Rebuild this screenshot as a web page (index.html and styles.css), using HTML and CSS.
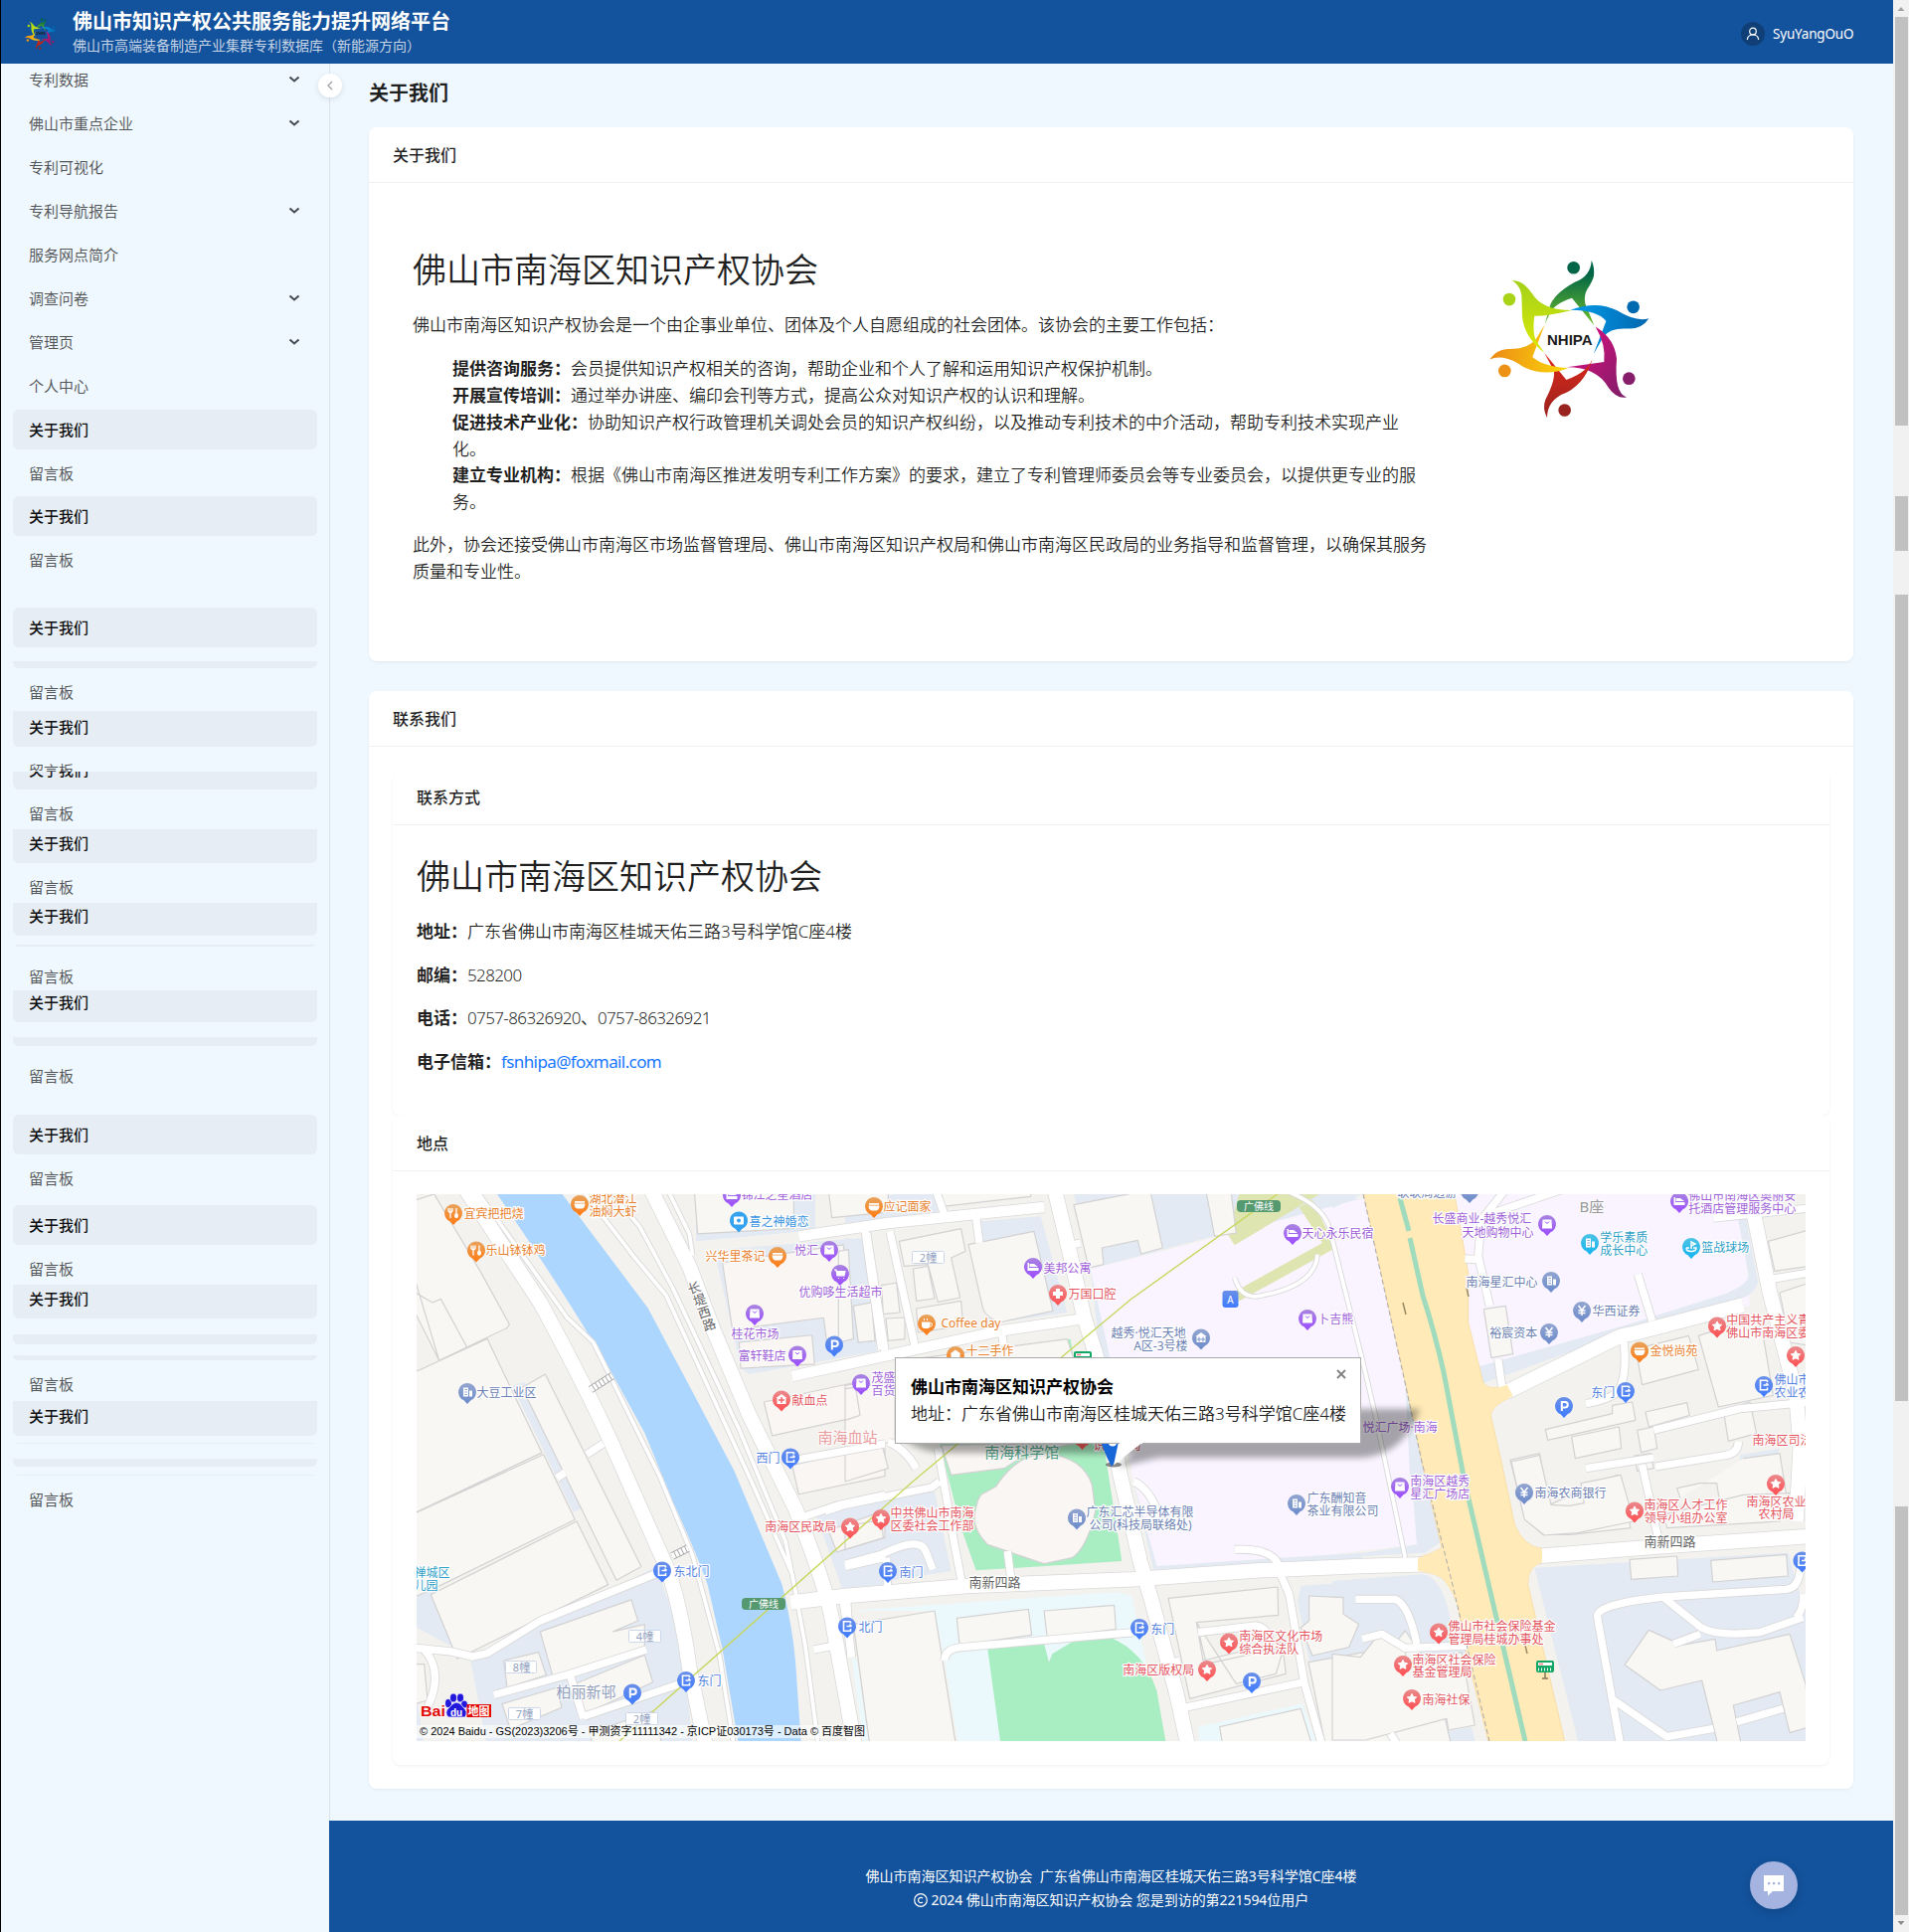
FILE: index.html
```html
<!DOCTYPE html>
<html lang="zh-CN">
<head>
<meta charset="utf-8">
<title>关于我们</title>
<link rel="stylesheet" href="styles.css">
</head>
<body>
<svg class="sprite" width="0" height="0">
  <defs>
    <linearGradient id="g-green" x1="0" y1="0" x2="0" y2="1"><stop offset=".2" stop-color="#016547"/><stop offset="1" stop-color="#6fbf2b"/></linearGradient>
    <linearGradient id="g-blue" x1="0" y1="0" x2="1" y2="0"><stop offset=".2" stop-color="#0392e0"/><stop offset="1" stop-color="#0166ad"/></linearGradient>
    <linearGradient id="g-pink" x1="0" y1="0" x2="1" y2="1"><stop offset=".3" stop-color="#c6127a"/><stop offset="1" stop-color="#7c1e66"/></linearGradient>
    <linearGradient id="g-red" x1="0" y1="0" x2="0" y2="1"><stop offset="0" stop-color="#e0281b"/><stop offset="1" stop-color="#97221d"/></linearGradient>
    <linearGradient id="g-amber" x1="0" y1="0" x2="1" y2="0"><stop offset="0" stop-color="#ec8a17"/><stop offset="1" stop-color="#fbd808"/></linearGradient>
    <linearGradient id="g-lime" x1="0" y1="0" x2="0" y2="1"><stop offset="0" stop-color="#a3d118"/><stop offset="1" stop-color="#dcea08"/></linearGradient>
    <symbol id="logo" viewBox="0 0 164 168">
      <g transform="translate(-56.67 -257.14) scale(.33333 .40816)">
        <path fill="url(#g-green)" d="M484 642Q494 658 491 680Q488 692 472 712Q460 728 465 748L492 802L425 735Q370 750 357 774L343 800Q350 780 357 758Q368 725 435 695Q482 680 484 642Z"/>
        <ellipse fill="#016547" cx="430" cy="660" rx="19" ry="15.500"/>
        <path fill="url(#g-blue)" d="M420 764Q500 740 560 765Q620 795 657 785Q635 813 590 810Q540 808 520 830L490 873L528 792Q505 765 420 764Z"/>
        <ellipse fill="#0069b0" cx="610" cy="757" rx="19" ry="15.500"/>
        <path fill="url(#g-pink)" d="M496 805Q555 835 560 885Q552 970 590 979Q560 984 535 955Q500 905 410 905L522 892Q528 850 496 805Z"/>
        <ellipse fill="#861d6b" cx="597" cy="933" rx="19" ry="15.500"/>
        <path fill="url(#g-red)" d="M342 870L408 936Q480 915 490 876Q470 940 410 967Q350 985 350 1030Q335 1005 345 985Q380 930 368 910Z"/>
        <ellipse fill="#99231e" cx="403" cy="1011" rx="19" ry="15.500"/>
        <path fill="url(#g-amber)" d="M343 800L306 880Q340 905 415 907Q345 930 280 905Q220 870 177 886Q195 862 230 860Q290 862 317 835Z"/>
        <ellipse fill="#ed9214" cx="222" cy="914" rx="19" ry="15.500"/>
        <path fill="url(#g-lime)" d="M244 692Q275 688 305 724Q335 765 425 765Q350 780 312 779Q305 820 317 840L342 870Q280 830 275 780Q274 745 273 728Q268 702 244 692Z"/>
        <ellipse fill="#a9d316" cx="236" cy="738" rx="19" ry="15.500"/>
      </g>
      <text x="60" y="89.500" textLength="45.500" lengthAdjust="spacingAndGlyphs" class="logo-text">NHIPA</text>
    </symbol>
    <symbol id="chev" viewBox="0 0 12 8"><path d="M1.500 1.500 6 5.500 10.500 1.500" fill="none" stroke="#444a50" stroke-width="2"/></symbol>
  </defs>
</svg>

<div class="app">
  <div class="screen">
    <header class="topbar">
      <svg class="brand-logo" width="34" height="34"><use href="#logo"/></svg>
      <div class="brand">
        <div class="brand-title">佛山市知识产权公共服务能力提升网络平台</div>
        <div class="brand-sub">佛山市高端装备制造产业集群专利数据库（新能源方向）</div>
      </div>
      <div class="user">
        <span class="avatar"><svg width="14" height="14" viewBox="0 0 14 14"><circle cx="7" cy="4.500" r="3.300"/><path d="M1.300 13Q1.800 8 7 8T12.700 13"/></svg></span>
        <span class="user-name">SyuYangOuO</span>
      </div>
    </header>

    <div class="body">
      <nav class="sidebar">
        <button class="collapse"><svg width="8" height="10" viewBox="0 0 8 10"><path d="M6 1 2 5 6 9"/></svg></button>
        <div class="slice s36"><div class="item">专利数据<svg><use href="#chev"/></svg></div></div>
        <div class="slice g4"><div class="item">佛山市重点企业<svg><use href="#chev"/></svg></div></div>
        <div class="slice g4"><div class="item">专利可视化</div></div>
        <div class="slice g4"><div class="item">专利导航报告<svg><use href="#chev"/></svg></div></div>
        <div class="slice g4"><div class="item">服务网点简介</div></div>
        <div class="slice g4"><div class="item">调查问卷<svg><use href="#chev"/></svg></div></div>
        <div class="slice g4"><div class="item">管理页<svg><use href="#chev"/></svg></div></div>
        <div class="slice g4"><div class="item">个人中心</div></div>
        <div class="slice g4"><div class="item on">关于我们</div></div>
        <div class="slice g4"><div class="item">留言板</div></div>
        <div class="slice g3"><div class="item on">关于我们</div></div>
        <div class="slice g4"><div class="item">留言板</div></div>
        <div class="slice g28"><div class="item on">关于我们</div></div>
        <div class="slice g14 s7"><div class="item on"></div></div>
        <div class="slice g5 s38 top"><div class="item">留言板</div></div>
        <div class="slice s36"><div class="item on">关于我们</div></div>
        <div class="slice g5 s20 top"><div class="item">留言板</div></div>
        <div class="slice s18"><div class="item on">关于我们</div></div>
        <div class="slice g5 s35 top"><div class="item">留言板</div></div>
        <div class="slice s34"><div class="item on">关于我们</div></div>
        <div class="slice g5 s35 top"><div class="item">留言板</div></div>
        <div class="slice s33"><div class="item on">关于我们</div></div>
        <div class="slice g9 s2"><div class="item on"></div></div>
        <div class="slice g11 s33 top"><div class="item">留言板</div></div>
        <div class="slice s32"><div class="item on">关于我们</div></div>
        <div class="slice g15 s9"><div class="item on"></div></div>
        <div class="slice g10"><div class="item">留言板</div></div>
        <div class="slice g19"><div class="item on">关于我们</div></div>
        <div class="slice g4"><div class="item">留言板</div></div>
        <div class="slice g7"><div class="item on">关于我们</div></div>
        <div class="slice g5 s35 top"><div class="item">留言板</div></div>
        <div class="slice s34"><div class="item on">关于我们</div></div>
        <div class="slice g16 s10"><div class="item on"></div></div>
        <div class="slice g11 s5"><div class="item on"></div></div>
        <div class="slice g5 s36 top"><div class="item">留言板</div></div>
        <div class="slice s35"><div class="item on">关于我们</div></div>
        <div class="slice g7 s1"><div class="item on"></div></div>
        <div class="slice g15 s8"><div class="item on"></div></div>
        <div class="slice g8 s1"><div class="item on"></div></div>
        <div class="slice g4"><div class="item">留言板</div></div>
      </nav>

      <div class="content">
        <main class="main">
          <h2 class="page-title">关于我们</h2>

          <section class="card about">
            <h3 class="card-head">关于我们</h3>
            <div class="about-body">
              <div class="about-text">
                <h1>佛山市南海区知识产权协会</h1>
                <p>佛山市南海区知识产权协会是一个由企事业单位、团体及个人自愿组成的社会团体。该协会的主要工作包括：</p>
                <ul>
                  <li><b>提供咨询服务：</b>会员提供知识产权相关的咨询，帮助企业和个人了解和运用知识产权保护机制。</li>
                  <li><b>开展宣传培训：</b>通过举办讲座、编印会刊等方式，提高公众对知识产权的认识和理解。</li>
                  <li><b>促进技术产业化：</b>协助知识产权行政管理机关调处会员的知识产权纠纷，以及推动专利技术的中介活动，帮助专利技术实现产业化。</li>
                  <li><b>建立专业机构：</b>根据《佛山市南海区推进发明专利工作方案》的要求，建立了专利管理师委员会等专业委员会，以提供更专业的服务。</li>
                </ul>
                <p>此外，协会还接受佛山市南海区市场监督管理局、佛山市南海区知识产权局和佛山市南海区民政局的业务指导和监督管理，以确保其服务质量和专业性。</p>
              </div>
              <svg class="about-logo" width="164" height="168"><use href="#logo"/></svg>
            </div>
          </section>

          <section class="card contact">
            <h3 class="card-head">联系我们</h3>
            <div class="contact-body">
              <section class="card inner info">
                <h3 class="card-head">联系方式</h3>
                <div class="info-body">
                  <h1>佛山市南海区知识产权协会</h1>
                  <p><b>地址：</b>广东省佛山市南海区桂城天佑三路3号科学馆C座4楼</p>
                  <p><b>邮编：</b><span class="num">528200</span></p>
                  <p><b>电话：</b><span class="num">0757-86326920</span>、<span class="num">0757-86326921</span></p>
                  <p><b>电子信箱：</b><a>fsnhipa@foxmail.com</a></p>
                </div>
              </section>
              <section class="card inner place">
                <h3 class="card-head">地点</h3>
                <div class="map">
<svg class="map-canvas" width="1397" height="550" viewBox="419 1201 1397 550">
  <defs>
    <linearGradient id="p-or" x1="0" y1="0" x2="0" y2="1"><stop offset="0" stop-color="#e8a35c"/><stop offset="1" stop-color="#ff7a12"/></linearGradient>
    <linearGradient id="p-pu" x1="0" y1="0" x2="0" y2="1"><stop offset="0" stop-color="#a884e0"/><stop offset="1" stop-color="#9c4cff"/></linearGradient>
    <linearGradient id="p-bl" x1="0" y1="0" x2="0" y2="1"><stop offset="0" stop-color="#6a90e8"/><stop offset="1" stop-color="#3f7bff"/></linearGradient>
    <linearGradient id="p-re" x1="0" y1="0" x2="0" y2="1"><stop offset="0" stop-color="#ea8a8c"/><stop offset="1" stop-color="#ff4d50"/></linearGradient>
    <linearGradient id="p-sl" x1="0" y1="0" x2="0" y2="1"><stop offset="0" stop-color="#92a5cf"/><stop offset="1" stop-color="#6c8bcb"/></linearGradient>
    <linearGradient id="p-cy" x1="0" y1="0" x2="0" y2="1"><stop offset="0" stop-color="#4dc3e4"/><stop offset="1" stop-color="#15b4f0"/></linearGradient>
    <path id="pin" d="M0-9A9 9 0 0 1 3.500 8.300L0 12-3.500 8.300A9 9 0 0 1 0-9Z"/>
    <g id="i-star"><path fill="#fff" stroke="#fff" stroke-linejoin="round" d="M0-4.600 1.600-1.600 4.700-1.200 2.400 1.100 3 4.300 0 2.800-3 4.300-2.400 1.100-4.700-1.200-1.600-1.600Z"/></g>
    <g id="i-gate"><path fill="none" stroke="#fff" stroke-width="1.600" d="M3.500-4.700H-3.500V4.700H3.500V2.500M3.500-4.700V-3M-.5 0H4.500M2.500-2 4.500 0"/></g>
    <g id="i-p"><path fill="none" stroke="#fff" stroke-width="2" d="M-2.200 5V-4H1A2.500 2.500 0 0 1 1 1.500H-2"/></g>
    <g id="i-bag"><path fill="#fff" d="M-4.500-4.500H4.500L5 4.500H-5Z"/><path fill="none" stroke="#a45cff" stroke-width="1" d="M-2-2.500Q0 1 2-2.500"/></g>
    <g id="i-bed"><path fill="#fff" d="M-5.500-4H-4V1H5.500V4H-5.500ZM-3.500-3H1L5 0H-3.500Z"/></g>
    <g id="i-bowl"><path fill="#fff" d="M-5.500-.5H5.500Q5 4.500 2 4.500H-2Q-5 4.500-5.500-.5ZM-5-3H5V-1.300H-5Z"/></g>
    <g id="i-cup"><path fill="#fff" d="M-5-1.500H3.500V2Q3.500 5 .5 5H-2Q-5 5-5 2Z"/><path fill="none" stroke="#fff" d="M3.500-.5Q6-.5 5.500 1.500T3.300 3M-2.500-3V-5M.5-3V-5"/></g>
    <g id="i-fork"><path fill="none" stroke="#fff" stroke-width="1.300" d="M-5-5V-2.500Q-5-1-3-1T-1-2.500V-5M-3-5V5M3 5V-5"/><ellipse fill="#fff" cx="3" cy="2.500" rx="2" ry="2.500"/></g>
    <g id="i-bld"><path fill="#fff" d="M-4-4.500H1V4.500H-4ZM2-1.500H5V4.500H2Z"/><path stroke="#7f97cd" stroke-width=".8" d="M-2.800-2.500H0M-2.800 0H0M-2.800 2.500H0"/></g>
    <g id="i-yen"><path fill="none" stroke="#fff" stroke-width="1.500" d="M-3.500-5 0-.5 3.500-5M0-.5V5M-3.500 0H3.500M-3.500 2.500H3.500"/></g>
    <g id="i-plus"><path fill="#fff" d="M-2-5H2V-2H5V2H2V5H-2V2H-5V-2H-2Z"/></g>
    <g id="i-home"><path fill="#fff" d="M0-5.500 5.500-1.500H4.500V4.500H-4.500V-1.500H-5.500Z"/></g>
    <g id="bus"><rect x="-9" y="-9" width="18" height="12" rx="2" fill="#12a765"/><rect x="-7" y="-7" width="14" height="3" fill="#fff"/><path d="M-6-5.500H-2" stroke="#f08080" stroke-width="1.500"/><path d="M-7 0H7" stroke="#fff" stroke-width="3" stroke-dasharray="1 2"/><path d="M0 3V9M-3 9H3" stroke="#887755" stroke-width="1.500"/></g>

    <g id="roads-xl">
      <g transform="translate(410 1190) scale(.33333 .36364)">
        <path d="M170 10 400 330Q560 600 640 770L790 1080Q830 1200 850 1340L900 1560"/>
        <path d="M730 10 850 230 920 400 1030 640 1170 900Q1270 1130 1285 1230L1350 1560"/>
      </g>
      <g transform="translate(850 1190) scale(.33333)"><path d="M630 10 685 240 720 400 770 560 830 880 890 1140 925 1260 1000 1540 1035 1700"/></g>
      <g transform="translate(1340 1190) scale(.33333)"><path d="M525 630 850 470Q870 460 900 455L1240 367M1255 10 1320 330 1400 640 1412 800 1400 1020M620 1125 1000 1095 1440 1065"/></g>
      <g transform="translate(850 1470) scale(.33333)"><path d="M-165 425 0 405 370 375 870 355 1250 328 1560 315 1750 310"/></g>
    </g>
    <g id="roads-l">
      <g transform="translate(850 1190) scale(.33333)"><path d="M-140 160 130 120 600 72M-160 582 0 547 470 445 710 410"/></g>
    </g>
    <g id="roads-m">
      <g transform="translate(410 1190) scale(.33333 .36364)">
        <path d="M1380 130 1430 460M1170 930 1300 890 1440 862M190 1310 240 1300 400 1210 750 1080M50 1290Q110 1350 60 1450M20 1285 130 1295 200 1310M530 1475 820 1385M490 1360 530 1480M540 750 590 720M1140 770 1440 720M1320 1060 1440 1035M1315 1160 1340 1310M260 1415 480 1360 720 1290M450 815 475 800M1225 1290 1280 1280"/>
      </g>
      <g transform="translate(850 1190) scale(.33333)"><path d="M65 150 120 505M135 145 210 490M270 10 298 90M395 105 405 180M470 430 478 490M280 800 330 1090 355 1220M130 780Q180 800 215 860M-60 990 0 970 260 918 285 900M670 190 710 180"/></g>
      <g transform="translate(850 1470) scale(.33333)"><path d="M490 270 500 350M128 390 125 290M0 310 110 280Q230 220 245 275L265 325M870 60Q920 80 950 170M1175 265Q1290 260 1310 315M1305 320 1340 400 1385 665 1440 860M1010 745 1385 665M300 600Q300 565 350 560L870 515M1065 515 1240 495Q1275 500 1285 550M5 420 18 590M980 610 1010 600"/></g>
      <g transform="translate(1340 1190) scale(.33333)"><path d="M880 480Q890 590 860 630 830 655 765 665M922 275 965 415M500 530 512 615M530 10 450 110 440 220 475 370M470 95 690 20M400 228 440 230M970 745 1230 680 1440 660M765 860 970 828M975 855 1190 820Q1225 812 1225 780M935 850 985 1080M1320 290 1440 270M1150 105 1440 75"/></g>
      <g transform="translate(1340 1470) scale(.33333)"><path d="M70 415 190 415Q230 430 255 550M90 535 150 520 220 562 410 555M870 860 845 720 800 470Q790 430 1000 408L1370 385Q1415 380 1412 300M1000 410 1100 490Q1140 530 1290 515L1420 470M850 720 1010 830 1150 805M1220 785 1360 745M1420 400Q1425 440 1400 470M175 820 200 860M1030 550 1110 520"/></g>
    </g>
    <g id="roads-s">
      <g transform="translate(410 1190) scale(.33333 .36364)"><path d="M200 10 480 370 560 440 620 550 760 810 860 1030 940 1300 985 1560M520 10 680 200 780 310 1040 830 1160 1080 1200 1280 1240 1560M600 10 700 120 800 290 1000 680 1140 990 1175 1150M780 10 850 140 860 200"/></g>
      <g transform="translate(850 1190) scale(.33333)"><path d="M1290 10Q1430 50 1460 130L1560 530 1600 700 1690 1130M1175 285Q1195 350 1250 340 1420 310 1425 215"/></g>
    </g>
  </defs>

  <rect x="419" y="1201" width="1397" height="550" fill="#f3f2ee"/>

  <!-- land blocks -->
  <g transform="translate(410 1190) scale(.33333 .36364)">
    <path class="block" d="M316 560 350 550 360 560 523 900 500 910ZM20 1130 80 1110 150 1290 20 1225ZM190 1320 750 1060 830 1270 860 1560H240ZM925 185 1390 150 1415 465 1030 528 1005 510ZM870 80 1230 30V130L870 160ZM1230 910 1440 860V1110L1310 1120ZM20 1380 50 1560H20Z"/>
    <path class="water" d="M255 10 450 10 725 345Q780 440 850 560L985 795 1130 1110Q1160 1220 1170 1320L1188 1560H1000L950 1290 905 1110Q870 1020 800 880L715 690 625 540Q480 310 255 10Z"/>
  </g>
  <g transform="translate(850 1190) scale(.33333)">
    <path class="block" d="M685 10H1500L1560 60 1170 145 740 258ZM405 115 590 100 670 390 430 425ZM160 30H280V90L0 120V70ZM0 165 45 170 95 490 0 520ZM740 260 765 350 800 530 770 520Z"/>
    <path class="mall" d="M740 258 960 205 1560 45 1765 10H2700L2730 370 2350 430 1900 560 1730 900 1725 1090 1470 1120 940 1155 870 900 800 530Z"/>
    <path class="olive" d="M1195 10H1470L1175 187 1155 155ZM1370 72 1410 50 1480 195 1190 355 1170 330 1440 180Z"/>
    <path class="green" d="M285 785H780L835 1140 395 1168 350 1040ZM480 500 680 470 690 530 400 530Z"/>
  </g>
  <g transform="translate(850 1470) scale(.33333)">
    <path class="block" d="M0 130 270 90 320 330 0 380ZM1375 375 1700 350V600H1400L1365 420ZM870 60 940 315 1560 275V300L930 325Z"/>
    <path class="pale" d="M10 450 820 393 865 405 960 843H340L300 600 270 450ZM1065 800 1380 730 1420 843H1070ZM20 590 35 600 70 843H55Z"/>
    <path class="green" d="M430 565 600 548 615 605 625 580 700 535 800 530Q900 570 940 690L967 843H468Z"/>
  </g>
  <g transform="translate(1340 1190) scale(.33333)">
    <path class="block" d="M442 553 880 430 1190 332Q1265 300 1255 270L1215 60H1240L1285 300Q1270 335 1240 345L880 450 450 605ZM218 560 235 900 285 900ZM0 30H95L0 75ZM1230 820 1350 800 1310 900H1175V880L1230 860Z"/>
  </g>
  <g transform="translate(1340 1470) scale(.33333)">
    <path class="block" d="M610 320 1375 275 1440 500V860H745ZM0 360 270 340Q330 345 355 470L405 580 220 600 0 570ZM235 0 280 30 330 240 280 275 0 290 255 250ZM1175 40 1270 15V45L1180 60ZM1195 130 1370 90 1370 120 1210 165ZM200 843 420 800 430 843Z"/>
  </g>

  <!-- buildings -->
  <g class="bld" transform="translate(410 1190) scale(.33333 .36364)">
    <path d="M-20 60 80 30 220 245 307 390 300 400 95 490 20 260ZM-20 280 75 330 100 320 180 455 95 490ZM-20 540 240 430 405 745-20 930ZM-20 930 410 750 505 930 70 1125-20 1160ZM70 1138 510 935 605 1110 150 1315ZM345 565 415 528 705 1060 630 1098ZM400 1240 675 1152 695 1210 620 1240 715 1220V1290L440 1370ZM290 1320 395 1297 418 1360 300 1395ZM490 1390 715 1305 740 1380 530 1470ZM285 1440 450 1395 465 1450 310 1510ZM550 1520 740 1460 770 1560H560ZM-20 1330 50 1330 60 1430-20 1450Z"/>
    <path class="warm" d="M950 220 1315 170 1345 430 1265 440 1255 372 980 405ZM1000 440 1220 420 1228 500 1005 512ZM1345 340 1400 330 1410 435 1360 440ZM1075 605 1355 550 1363 645 1100 698ZM1160 780 1440 720V810L1180 860ZM1270 960 1440 905V980L1295 1020Z"/>
    <path d="M865 20 1165 20V125L875 140ZM1270 20H1450V80L1280 95Z"/>
  </g>
  <g class="bld" transform="translate(850 1190) scale(.33333)">
    <path d="M288 20H560V40L295 70ZM163 175 350 137 363 205 320 225 347 345 280 358 250 245 178 250ZM372 185 570 145 627 385 465 420Q420 400 415 375ZM205 258 250 250 270 348 215 355ZM690 65 920 20 958 195 893 213 883 172 775 195 780 245 735 255ZM1090 30H1165L1180 150 1115 160ZM110 308 155 300 165 390 115 395ZM123 408 180 405 180 470 130 475ZM25 370 80 360 90 475 40 480ZM215 378 350 355 356 430 220 450ZM-20 205 10 200 25 470-20 480ZM210 530 670 470 690 530Z"/>
    <path class="warm" d="M0 620 150 600V780L0 800ZM0 800 110 785 130 860 0 900ZM290 790 700 785 560 810 480 860 320 880ZM0 610 30 605 45 700 0 715Z"/>
    <path class="warm" d="M410 940 455 915Q520 815 610 815 720 830 745 910L755 990Q730 1100 685 1130L600 1148 430 1090Q390 1050 390 1010 395 960 410 940Z"/>
  </g>
  <g class="bld" transform="translate(850 1470) scale(.33333)">
    <path d="M25 490 270 450 335 860H75ZM337 472 553 445 563 523 345 553ZM600 450 812 433 817 505 610 532ZM975 412 1305 378 1307 463 1060 485 1090 610 1320 560 1330 640 1040 715ZM1060 485 1080 600 1330 540 1300 640 1180 670ZM1130 800 1375 745 1410 860H1140ZM1400 405 1503 410V460L1550 490 1520 560 1410 585 1375 500 1400 480ZM1398 605 1650 560 1690 510 1780 640 1830 860H1450ZM0 195 110 175 115 230 0 265Z"/>
  </g>
  <g class="bld" transform="translate(1340 1190) scale(.33333)">
    <path d="M457 380 523 370 545 515 480 527ZM915 500 1075 460 1105 562 935 608ZM1105 460 1290 400 1330 640 1165 675ZM1315 175 1440 140V250L1335 265ZM1350 330 1440 300V490L1380 480ZM643 743 845 695V670L905 660 915 715 650 775ZM722 765 865 735 872 800 733 830ZM945 690 1070 662 1078 700 955 735ZM920 745 970 735 980 800 932 812ZM1180 685 1260 660 1280 755 1195 778ZM537 835 625 815 655 970 860 880 900 1040 720 1060 635 1060 580 1010ZM912 822 960 815 970 860 920 868ZM1240 830 1350 815 1370 940 1170 970 1160 905 1110 905 1040 920 1050 950"/>
  </g>
  <g class="bld" transform="translate(1340 1470) scale(.33333)">
    <path d="M540 0 580 175 640 222 740 215 910 180 870 40 800 55 750 65 760 125 715 133 660 130 625-20ZM897 295 1040 285 1043 345 902 355ZM1142 298 1370 280 1375 345 1148 363ZM955 508 1055 553 1155 535 1160 570 1380 520 1428 670 1440 800 1380 818 1350 695 1210 735 1235 860H1165L1115 660 990 690 882 613ZM0 580 85 590 145 515 220 570 225 610 390 575 430 795 350 810 345 775 100 840H0ZM1010 200 1000 160 1240 100 1380 95 1350 180Z"/>
  </g>

  <!-- trunk road -->
  <path class="trunk" transform="translate(1340 1190) scale(.33333)" d="M90 10H365L410 270V420L455 600Q470 630 528 608L545 642Q480 670 478 700L510 840 550 1030Q580 1100 635 1102V1145Q590 1150 590 1210L705 1700H475L400 1400 380 1280Q365 1230 340 1200 320 1175 258 1170V1130Q300 1120 330 1100L270 840 220 600Z"/>

  <!-- streets: casing first, then surface -->
  <g class="road casing"><use href="#roads-s" class="w-s"/><use href="#roads-m" class="w-m"/><use href="#roads-l" class="w-l"/><use href="#roads-xl" class="w-xl"/></g>
  <g class="road surface"><use href="#roads-s" class="w-s"/><use href="#roads-m" class="w-m"/><use href="#roads-l" class="w-l"/><use href="#roads-xl" class="w-xl"/></g>
  <path class="trunk flat" transform="translate(1340 1190) scale(.33333)" d="M455 600Q470 630 528 608L545 642Q480 670 478 700L400 700ZM550 1030Q580 1100 633 1102V1145Q590 1150 590 1210L500 1200V1000ZM380 1280Q365 1230 340 1200 320 1175 258 1170V1130Q300 1120 330 1100L450 1100V1280Z"/>
  <path class="median" d="M1408 1205 1417 1238M1418 1245 1431 1303Q1443 1340 1452 1380L1473 1490 1534 1751"/>
  <path class="rail" d="M1371 1201 1413 1390 1430 1470 1460 1590 1498 1751"/>
  <g class="ladder"><path d="M594 1397.500 616 1383.500M676 1565 692 1557"/><path class="rungs" d="M594 1397.500 616 1383.500M676 1565 692 1557"/></g>
  <path class="metro" d="M1286 1200 1137 1307 918 1490 623 1751"/>
  <path d="M1411 1310 1414 1322M1475 1295 1477 1304M1534 1655 1536 1663" stroke="#9b8a64" stroke-width="1.500"/>

  <!-- map labels, y is the optical middle of the line -->
  <g class="lb" transform="translate(-.5 3.800)">
    <g fill="#e8812c">
      <text x="467" y="1221.600">宜宾把把烧</text><text x="489" y="1258.700">乐山钵钵鸡</text><text x="593" y="1206.400">湖北潜江</text><text x="593" y="1219">油焖大虾</text>
      <text x="710" y="1264">兴华里茶记</text><text x="889" y="1214.700">应记面家</text><text x="947" y="1331.700">Coffee day</text><text x="972" y="1359">十二手作</text><text x="1660" y="1359.700">金悦尚苑</text>
    </g>
    <g fill="#a05fd8">
      <text x="746" y="1202">锦江之星酒店</text><text x="799.500" y="1258">悦汇</text><text x="804" y="1300.500">优购哆生活超市</text><text x="736" y="1342">桂花市场</text><text x="743" y="1364">富轩鞋店</text><text x="877" y="1386.700">茂盛</text><text x="877" y="1399">百货</text>
      <text x="1050" y="1276">美邦公寓</text><text x="1325.700" y="1327.700">卜吉熊</text><text x="1310" y="1241.700">天心永乐民宿</text><text x="1441" y="1226.700">长盛商业-越秀悦汇</text><text x="1471" y="1240">天地购物中心</text>
      <text x="1698.700" y="1203">佛山市南海区奥丽安</text><text x="1698.700" y="1216">托酒店管理服务中心</text><text x="1371" y="1436">悦汇广场·南海</text><text x="1418.700" y="1490">南海区越秀</text><text x="1418.700" y="1503">星汇广场店</text>
    </g>
    <g fill="#e45560">
      <text x="797" y="1409">献血点</text><text x="769.700" y="1536.500">南海区民政局</text><text x="896" y="1522">中共佛山市南海</text><text x="896" y="1535">区委社会工作部</text><text x="1075" y="1302.700">万国口腔</text><text x="1100" y="1454">识产权局</text>
      <text x="1246.700" y="1646.700">南海区文化市场</text><text x="1246.700" y="1659">综合执法队</text><text x="1129.700" y="1680">南海区版权局</text><text x="1736.700" y="1328.700">中国共产主义青</text><text x="1736.700" y="1341">佛山市南海区委</text><text x="1763" y="1449">南海区司法</text>
      <text x="1654" y="1514.700">南海区人才工作</text><text x="1654" y="1527.700">领导小组办公室</text><text x="1757" y="1511">南海区农业</text><text x="1769" y="1523.700">农村局</text><text x="1457" y="1636.700">佛山市社会保险基金</text><text x="1457" y="1649.700">管理局桂城办事处</text>
      <text x="1421" y="1670">南海区社会保险</text><text x="1421" y="1682.700">基金管理局</text><text x="1431" y="1710">南海社保</text>
    </g>
    <g fill="#5583e0">
      <text x="761" y="1467">西门</text><text x="678" y="1581">东北门</text><text x="864" y="1637">北门</text><text x="702" y="1691">东门</text><text x="905" y="1582">南门</text><text x="1157.700" y="1639">东门</text><text x="1600.700" y="1401">东门</text><text x="1785" y="1388">佛山市</text><text x="1785" y="1401">农业农</text>
    </g>
    <g fill="#6b80b3">
      <text x="480" y="1401">大豆工业区</text><text x="1118" y="1341">越秀·悦汇天地</text><text x="1140.700" y="1354">A区-3号楼</text><text x="1093" y="1521.700">广东汇芯半导体有限</text><text x="1096" y="1534.700">公司(科技局联络处)</text><text x="1315" y="1507">广东酬知音</text><text x="1315" y="1520">茶业有限公司</text>
      <text x="1406" y="1200">联联周边游</text><text x="1475" y="1290">南海星汇中心</text><text x="1602" y="1319">华西证券</text><text x="1498.700" y="1341.700">裕宸资本</text><text x="1544" y="1502.700">南海农商银行</text>
    </g>
    <g fill="#2ea0c8"><text x="754" y="1229" fill="#3a93e0">喜之神婚恋</text><text x="417" y="1582.400">禅城区</text><text x="417" y="1595.500">儿园</text><text x="1609.700" y="1245.700">学乐素质</text><text x="1609.700" y="1258.700">成长中心</text><text x="1711.700" y="1255.700">篮战球场</text></g>
    <g fill="#666" class="street"><text x="975" y="1592">南新四路</text><text x="1654" y="1551">南新四路</text><text x="694 699.500 704 709" y="1298 1310 1322.500 1335" rotate="-18">长堤西路</text></g>
    <g class="area"><text x="823" y="1447" fill="#ea9c9e">南海血站</text><text x="560" y="1703" fill="#93a0bd">柏丽新邨</text><text x="990.700" y="1462" fill="#55a58a">南海科学馆</text><text x="1589" y="1215.500" fill="#999">B座</text></g>
  </g>
  <g class="tag">
    <rect x="632.500" y="1639.500" width="32" height="12" rx="1"/><rect x="508.500" y="1670.500" width="31" height="12" rx="1"/><rect x="511.500" y="1717.500" width="32" height="12" rx="1"/><rect x="629.500" y="1722.500" width="32" height="12" rx="1"/><rect x="917.500" y="1258.500" width="32" height="12" rx="1"/>
    <text x="648.500" y="1649.500">4幢</text><text x="524.500" y="1680.500">8幢</text><text x="527.500" y="1727.500">7幢</text><text x="645.500" y="1732.500">2幢</text><text x="933.500" y="1268.500">2幢</text>
  </g>
  <g class="line-tag"><rect x="746" y="1607" width="44" height="12" rx="4"/><text x="768" y="1617">广佛线</text><rect x="1244" y="1207" width="44" height="12" rx="4"/><text x="1266" y="1217">广佛线</text></g>

  <!-- pins -->
  <g fill="url(#p-or)">
    <g transform="translate(456 1220)"><use href="#pin"/><use href="#i-fork"/></g><g transform="translate(479 1257.500)"><use href="#pin"/><use href="#i-fork"/></g><g transform="translate(583 1211)"><use href="#pin"/><use href="#i-bowl"/></g><g transform="translate(782 1263)"><use href="#pin"/><use href="#i-bowl"/></g>
    <g transform="translate(879 1213)"><use href="#pin"/><use href="#i-bowl"/></g><g transform="translate(932 1331)"><use href="#pin"/><use href="#i-cup"/></g><g transform="translate(961 1363)"><use href="#pin"/><use href="#i-home"/></g><g transform="translate(1649 1358.500)"><use href="#pin"/><use href="#i-bowl"/></g>
  </g>
  <g fill="url(#p-pu)">
    <g transform="translate(736 1202)"><use href="#pin"/><use href="#i-bed"/></g><g transform="translate(834 1257)"><use href="#pin"/><use href="#i-bag"/></g><g transform="translate(845 1281)"><use href="#pin"/><path d="M-6-4H-4L-3 2H4L5-2.500H-4M-2 4.500H-1M3 4.500H4" fill="#fff" stroke="#fff" stroke-width="1.200"/></g><g transform="translate(759 1321)"><use href="#pin"/><use href="#i-bag"/></g><g transform="translate(802 1362.500)"><use href="#pin"/><use href="#i-bag"/></g><g transform="translate(866 1391)"><use href="#pin"/><use href="#i-bag"/></g>
    <g transform="translate(1039 1274)"><use href="#pin"/><use href="#i-bed"/></g><g transform="translate(1315 1326)"><use href="#pin"/><use href="#i-bag"/></g><g transform="translate(1300 1240)"><use href="#pin"/><use href="#i-bed"/></g><g transform="translate(1556 1231)"><use href="#pin"/><use href="#i-bag"/></g><g transform="translate(1689 1208)"><use href="#pin"/><use href="#i-bed"/></g><g transform="translate(1408 1495)"><use href="#pin"/><use href="#i-bag"/></g>
  </g>
  <g fill="url(#p-re)">
    <g transform="translate(786 1407.500)"><use href="#pin"/><use href="#i-home"/><path d="M0-2.500V3.500M-3 .5H3" stroke="#f2666a" stroke-width="1.500"/></g><g transform="translate(855 1535.500)"><use href="#pin"/><use href="#i-star"/></g><g transform="translate(886 1527)"><use href="#pin"/><use href="#i-star"/></g><g transform="translate(1064 1301)"><use href="#pin"/><use href="#i-plus"/></g><g transform="translate(1088.500 1446)"><use href="#pin"/></g>
    <g transform="translate(1236 1651.500)"><use href="#pin"/><use href="#i-star"/></g><g transform="translate(1214 1679)"><use href="#pin"/><use href="#i-star"/></g><g transform="translate(1727 1333.500)"><use href="#pin"/><use href="#i-star"/></g><g transform="translate(1806 1363)"><use href="#pin"/><use href="#i-star"/></g><g transform="translate(1644 1519.500)"><use href="#pin"/><use href="#i-star"/></g>
    <g transform="translate(1786 1492)"><use href="#pin"/><use href="#i-star"/></g><g transform="translate(1447 1641.500)"><use href="#pin"/><use href="#i-star"/></g><g transform="translate(1411 1674)"><use href="#pin"/><use href="#i-star"/></g><g transform="translate(1420 1708)"><use href="#pin"/><use href="#i-star"/></g>
  </g>
  <g fill="url(#p-bl)">
    <g transform="translate(839 1352.500)"><use href="#pin"/><use href="#i-p"/></g><g transform="translate(636 1702.500)"><use href="#pin"/><use href="#i-p"/></g><g transform="translate(1259 1691)"><use href="#pin"/><use href="#i-p"/></g><g transform="translate(1573 1414)"><use href="#pin"/><use href="#i-p"/></g>
    <g transform="translate(795 1465.500)"><use href="#pin"/><use href="#i-gate"/></g><g transform="translate(666 1579.500)"><use href="#pin"/><use href="#i-gate"/></g><g transform="translate(852 1635.500)"><use href="#pin"/><use href="#i-gate"/></g><g transform="translate(690 1690)"><use href="#pin"/><use href="#i-gate"/></g><g transform="translate(893 1580)"><use href="#pin"/><use href="#i-gate"/></g>
    <g transform="translate(1146 1637)"><use href="#pin"/><use href="#i-gate"/></g><g transform="translate(1635 1399)"><use href="#pin"/><use href="#i-gate"/></g><g transform="translate(1774 1393)"><use href="#pin"/><use href="#i-gate"/></g><g transform="translate(1812.500 1569.500)"><use href="#pin"/><use href="#i-gate"/></g>
    <rect x="1229.500" y="1298" width="16" height="17" rx="3"/><text x="1237.500" y="1311" class="exit">A</text>
  </g>
  <g fill="url(#p-sl)">
    <g transform="translate(470 1400)"><use href="#pin"/><use href="#i-bld"/></g><g transform="translate(1208 1345.500)"><use href="#pin"/><use href="#i-home"/><path d="M-2-1V4M2-1V4M-4 1.500H4" stroke="#7f97cd"/></g><g transform="translate(1083 1526.500)"><use href="#pin"/><use href="#i-bld"/></g><g transform="translate(1304 1512)"><use href="#pin"/><use href="#i-bld"/></g><g transform="translate(1478 1198)"><use href="#pin"/></g><g transform="translate(1560 1288)"><use href="#pin"/><use href="#i-bld"/></g>
    <g transform="translate(1591 1318)"><use href="#pin"/><use href="#i-yen"/></g><g transform="translate(1558 1340)"><use href="#pin"/><use href="#i-yen"/></g><g transform="translate(1533 1501)"><use href="#pin"/><use href="#i-yen"/></g>
  </g>
  <g fill="url(#p-cy)">
    <g transform="translate(1599 1250)"><use href="#pin"/><use href="#i-bld"/></g><g transform="translate(1701 1254)"><use href="#pin"/><path d="M-5 1Q-5 4.500 0 4.500T5 1H2M-5 1H-2M0 2V-5L4-3 0-1" fill="none" stroke="#fff" stroke-width="1.400"/></g><g transform="translate(743 1227.500)"><use href="#pin" fill="#35a2f0"/><rect x="-5" y="-4" width="10" height="8" rx="1" fill="#fff"/><circle r="2" fill="#35a2f0"/></g>
  </g>
  <use href="#bus" x="1554" y="1679"/><use href="#bus" x="1089" y="1368"/>

  <!-- callout shadow, marker, callout tail -->
  <path class="shade" d="M905 1445H1300V1417H1428Q1412 1464 1368 1466H1165L1122 1476 1140 1462 950 1461Q925 1461 905 1445Z"/>
  <ellipse cx="1120" cy="1473" rx="8" ry="2.500" fill="#555" opacity=".7"/>
  <path d="M1106 1445H1133Q1128 1462 1118 1475 1109 1458 1106 1445Z" fill="#1767d8"/>
  <circle cx="1119" cy="1450" r="4.500" fill="#fff"/>
  <path d="M1125 1450 1120 1473.500 1150 1450Z" fill="#fff"/>

  <!-- provider mark -->
  <g class="provider">
    <text x="423" y="1726" textLength="25" lengthAdjust="spacingAndGlyphs" class="bai">Bai</text>
    <g fill="#2319dc" stroke="#fff" stroke-width=".8"><ellipse cx="451" cy="1713" rx="3.500" ry="4.500"/><ellipse cx="456" cy="1707.500" rx="3.500" ry="4.500"/><ellipse cx="463" cy="1707.500" rx="3.500" ry="4.500"/><ellipse cx="467" cy="1714" rx="3.500" ry="4"/><path d="M459 1712Q463 1712 466 1717 471 1721 468 1727H451Q446 1722 452 1717 456 1712 459 1712Z"/></g>
    <text x="453" y="1726" class="du">du</text>
    <rect x="469.500" y="1714" width="24.500" height="13" fill="#e10602"/><text x="470.500" y="1725" class="ditu">地图</text>
  </g>
  <rect x="419" y="1735" width="452" height="13" fill="#fff" opacity=".6"/>
  <text x="422" y="1745" textLength="448" class="copy">© 2024 Baidu - GS(2023)3206号 - 甲测资字11111342 - 京ICP证030173号 - Data © 百度智图</text>
</svg>
                  <div class="popup">
                    <button class="popup-close"><svg width="10" height="10" viewBox="0 0 10 10"><path d="M1 1 9 9M9 1 1 9"/></svg></button>
                    <div class="popup-title">佛山市南海区知识产权协会</div>
                    <div class="popup-text">地址：广东省佛山市南海区桂城天佑三路3号科学馆C座4楼</div>
                  </div>
                </div>
              </section>
            </div>
          </section>
        </main>

        <footer class="footer">
          <div>佛山市南海区知识产权协会&nbsp; 广东省佛山市南海区桂城天佑三路3号科学馆C座4楼</div>
          <div class="foot-copy"><svg width="14" height="14" viewBox="0 0 14 14"><circle cx="7" cy="7" r="6.300"/><path d="M9 5.200A2.600 2.600 0 1 0 9 8.800"/></svg> 2024 佛山市南海区知识产权协会 您是到访的第221594位用户</div>
          <button class="fab"><svg width="22" height="22" viewBox="0 0 22 22"><path fill="#fff" d="M1 1H21V17H10L5 21.500V17H1Z"/><path fill="#a4b3e0" d="M5 8H7.200V10.200H5ZM10 8H12.200V10.200H10ZM15 8H17.200V10.200H15Z"/></svg></button>
        </footer>
      </div>
    </div>
  </div>

  <div class="scrollbar">
    <svg width="16" height="17" viewBox="0 0 16 17"><path d="M4.500 11 8 7 11.500 11Z" fill="#a3a3a3"/></svg>
    <div class="thumb t1"></div><div class="thumb t2"></div><div class="thumb t3"></div><div class="thumb t4"></div>
    <svg width="16" height="17" viewBox="0 0 16 17"><path d="M4.500 6 8 10 11.500 6Z" fill="#8a8a8a"/></svg>
  </div>
</div>
</body>
</html>
```
FILE: styles.css
```css
* { box-sizing: border-box; }
body {
  margin: 0;
  background: #f0f8ff;
  color: rgba(0, 0, 0, .88);
  font: 14px/1.5715 "Noto Sans", "Noto Sans CJK SC", sans-serif;
  text-spacing-trim: space-all;
}
h1, h2, h3, p, ul { margin: 0; padding: 0; }
button { border: 0; padding: 0; display: flex; align-items: center; justify-content: center; }
.sprite { position: absolute; }
.logo-text { font: bold 15px "Liberation Sans", sans-serif; fill: #1c1c1c; }

.app { display: flex; width: 1920px; height: 1943px; overflow: hidden; }
.screen { width: 1904px; display: flex; flex-direction: column; border-left: 1px solid #000; }

.topbar { height: 64px; flex: none; background: #13529c; display: flex; align-items: center; padding: 0 40px 0 23px; color: #fff; }
.brand-logo { margin-top: 4px; }
.brand { margin-left: 15px; padding-top: 2px; }
.brand-title { font-size: 20px; line-height: 26px; font-weight: 700; }
.brand-sub { font-size: 14px; line-height: 22px; color: rgba(255, 255, 255, .75); }
.user { margin: 4px 0 0 auto; display: flex; align-items: center; gap: 8px; }
.avatar { width: 24px; height: 24px; border-radius: 50%; background: #103f78; display: flex; align-items: center; justify-content: center; }
.avatar svg { fill: none; stroke: #fff; stroke-width: 1.200; }
.user-name { padding-top: 1px; font-size: 13.500px; letter-spacing: -.2px; width: 81px; white-space: nowrap; }

.body { flex: 1; display: flex; min-height: 0; }
.sidebar { position: relative; width: 331px; flex: none; padding: 0 12px; border-right: 1px solid #dbe4ec; }
.collapse { position: absolute; right: -13px; top: 10px; width: 24px; height: 24px; border-radius: 50%; background: #fff; box-shadow: 0 2px 6px rgba(0, 0, 0, .1); }
.collapse svg { fill: none; stroke: #a0a4a8; stroke-width: 1.400; }

/* a slice shows the lower (or upper, with .top) part of a menu row */
.slice { height: 40px; overflow: hidden; display: flex; align-items: flex-end; }
.slice.top { align-items: flex-start; }
.item { flex: none; width: 306px; height: 40px; padding: 1.500px 16px 0; border-radius: 6px; display: flex; align-items: center; justify-content: space-between; font-size: 15px; color: rgba(0, 0, 0, .68); }
.slice.top .item { padding-top: 0; }
.item svg { width: 12px; height: 8px; margin: -2px 1px 0 0; }
.item.on { background: #e6edf4; color: rgba(0, 0, 0, .95); font-weight: 500; }
.s1 { height: 1px; } .s2 { height: 2px; } .s5 { height: 5px; } .s7 { height: 7px; } .s8 { height: 8px; } .s9 { height: 9px; } .s10 { height: 10px; }
.s18 { height: 18px; } .s20 { height: 20px; } .s32 { height: 32px; } .s33 { height: 33px; } .s34 { height: 34px; } .s35 { height: 35px; } .s36 { height: 36px; } .s38 { height: 38px; }
.g3 { margin-top: 3px; } .g4 { margin-top: 4px; } .g5 { margin-top: 5px; } .g7 { margin-top: 7px; } .g8 { margin-top: 8px; } .g9 { margin-top: 9px; } .g10 { margin-top: 10px; }
.g11 { margin-top: 11px; } .g14 { margin-top: 14px; } .g15 { margin-top: 15px; } .g16 { margin-top: 16px; } .g19 { margin-top: 19px; } .g28 { margin-top: 28px; }

.content { flex: 1; display: flex; flex-direction: column; }
.main { height: 1767px; padding: 14px 40px 0 39px; }
.page-title { font-size: 20px; line-height: 32px; font-weight: 600; margin-bottom: 18px; }
.card { background: #fff; border-radius: 8px; box-shadow: 0 1px 2px rgba(0, 0, 0, .03), 0 1px 6px -1px rgba(0, 0, 0, .02), 0 2px 4px rgba(0, 0, 0, .02); }
.card-head { height: 56px; padding: 0 24px; line-height: 57px; font-size: 16px; font-weight: 500; border-bottom: 1px solid #f0f0f0; }
.about { height: 537px; }
.about-body { padding: 60px 44px; display: flex; }
.about-text { width: 1025px; font-size: 17px; line-height: 26.700px; font-weight: 350; }
h1 { font-size: 34px; line-height: 53px; font-weight: 350; padding-top: 1px; margin-bottom: 16px; }
.about-text p, .info-body p { margin-bottom: 17px; }
.about-text ul { list-style: none; padding: .700px 0 0 40px; margin-bottom: 16.500px; }
b { font-weight: 700; }
.about-logo { margin: 13px 0 0 56px; }

.contact { margin-top: 30px; height: 1104px; }
.contact-body { padding: 23px 24px; }
.info { height: 348px; }
.info-body { padding: 24px; font-size: 17px; line-height: 26.700px; font-weight: 350; }
.info-body .num { letter-spacing: -.620px; }
.info-body a { color: #1677ff; font-weight: 400; letter-spacing: -.600px; }
.place { height: 653px; }
.map { position: relative; margin: 23px 24px 0; width: 1397px; height: 550px; overflow: hidden; }
.map-canvas { display: block; }

.block { fill: #e3eaf3; }
.water { fill: #add6ff; }
.mall { fill: #f9f4ff; }
.green { fill: #a9edc2; }
.pale { fill: #ecf9fc; }
.olive { fill: #dfe5b0; }
.bld path { fill: #f8f7f4; stroke: #d3d2d3; stroke-width: 1.200; stroke-linejoin: round; vector-effect: non-scaling-stroke; }
.bld .warm { fill: #faf6f4; }
.trunk { fill: #ffeab8; stroke: #f8d492; stroke-width: 2; }
.trunk.flat { stroke: none; }
.road { fill: none; stroke-linejoin: round; }
#roads-s path, #roads-m path, #roads-l path, #roads-xl path { vector-effect: non-scaling-stroke; }
.casing { stroke: #d9d9da; }
.casing .w-s { stroke-width: 5.500px; } .casing .w-m { stroke-width: 9px; } .casing .w-l { stroke-width: 12px; } .casing .w-xl { stroke-width: 16px; }
.surface { stroke: #fff; }
.surface .w-s { stroke-width: 3.700px; } .surface .w-m { stroke-width: 7.300px; } .surface .w-l { stroke-width: 10.500px; } .surface .w-xl { stroke-width: 14.500px; }
.median { fill: none; stroke: #a0dbbe; stroke-width: 5; }
.rail { fill: none; stroke: #aaa; stroke-width: 1; stroke-dasharray: 5 3; }
.ladder { stroke: #aaa; stroke-width: 8; }
.ladder .rungs { stroke: #fff; stroke-width: 6; stroke-dasharray: 3 1; }
.metro { fill: none; stroke: #c8d75f; stroke-width: 1.400; }
.lb text { font: 12px "Noto Sans", "Noto Sans CJK SC", sans-serif; paint-order: stroke; stroke: #fff; stroke-width: 2.500px; stroke-linejoin: round; }
.lb .street text { font-size: 13px; }
.lb .area text { font-size: 15px; stroke-opacity: .6; }
.tag rect { fill: #fff; stroke: #ccd8ea; }
.tag text { font: 11px "Noto Sans", "Noto Sans CJK SC", sans-serif; fill: #93a2c0; text-anchor: middle; }
.line-tag rect { fill: #54996f; }
.line-tag text { font: 10px "Noto Sans CJK SC", sans-serif; fill: #fff; text-anchor: middle; }
.exit { font: 10px "Noto Sans", sans-serif; fill: #fff; text-anchor: middle; }
.shade { fill: #000; opacity: .33; filter: blur(3px); }
.bai { font: bold 15px "Liberation Sans", sans-serif; fill: #e10602; stroke: #fff; stroke-width: 1.500px; paint-order: stroke; }
.du { font: bold 10px "Liberation Sans", sans-serif; fill: #fff; }
.ditu { font: bold 11px "Noto Sans CJK SC", sans-serif; fill: #fff; }
.copy { font: 11px "Liberation Sans", "Noto Sans CJK SC", sans-serif; fill: #000; }

.popup { position: absolute; left: 481px; top: 164px; width: 469px; height: 87px; background: #fff; border: 1px solid #ababab; padding: 15px 15px; font-size: 17px; line-height: 27px; white-space: nowrap; }
.popup::after { content: ""; position: absolute; left: 225px; bottom: -1px; width: 23px; height: 1px; background: #fff; }
.popup-title { font-weight: 700; color: #000; }
.popup-text { font-weight: 350; color: #222; }
.popup-close { position: absolute; right: 14px; top: 11px; background: none; }
.popup-close svg { stroke: #808080; stroke-width: 1.800; }

.footer { position: relative; flex: 1; margin-left: -1px; background: #13529c; color: #fff; text-align: center; padding-top: 44px; line-height: 24px; font-size: 14px; }
.foot-copy { letter-spacing: -.050px; }
.foot-copy svg { vertical-align: -2px; fill: none; stroke: #fff; stroke-width: 1.200; }
.fab { position: absolute; right: 96px; top: 41px; width: 48px; height: 48px; border-radius: 50%; background: #a4b3e0; box-shadow: 0 3px 8px rgba(0, 0, 0, .15); }

.scrollbar { width: 16px; background: #f1f1f1; display: flex; flex-direction: column; }
.scrollbar svg { display: block; flex: none; }
.thumb { width: 13px; margin-left: 2px; background: #c1c1c1; flex: none; }
.t1 { height: 411px; }
.t2 { height: 55px; margin-top: 71px; }
.t3 { height: 811px; margin-top: 44px; }
.t4 { height: 411px; margin-top: 106px; }
```
